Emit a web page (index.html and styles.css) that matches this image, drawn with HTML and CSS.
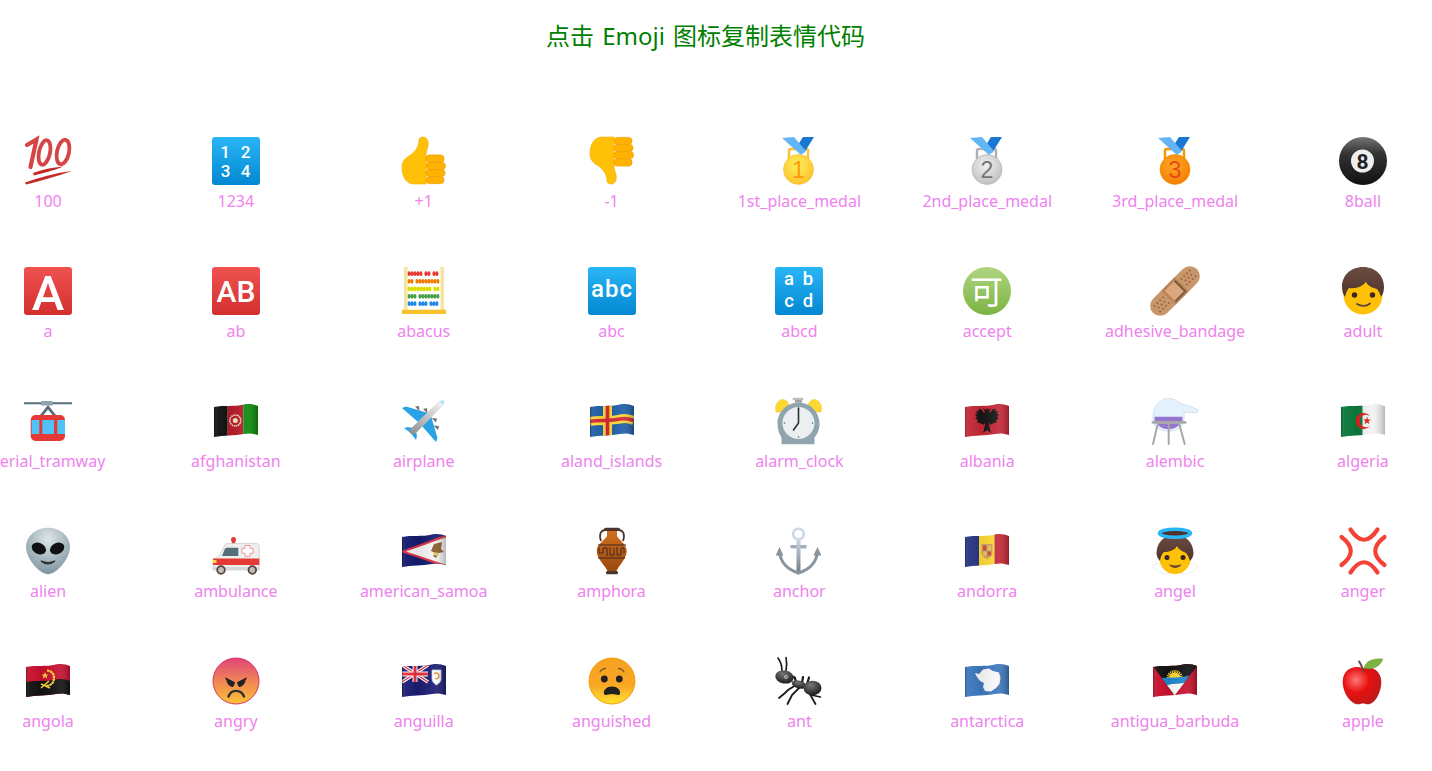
FILE: index.html
```html
<!DOCTYPE html>
<html lang="zh-CN">
<head>
    <meta charset="UTF-8">
    <meta name="viewport" content="width=device-width, initial-scale=1.0">
    <title>Emoji</title>
    <link rel="stylesheet" href="styles.css">
</head>
<body>
    <!-- shared gradients and shapes for the icons -->
    <svg class="icon-defs" width="0" height="0">
        <defs>
            <linearGradient id="tile-blue" x1="0" y1="0" x2="0" y2="1"><stop offset="0" stop-color="#29b6f6"/><stop offset="1" stop-color="#0288d1"/></linearGradient>
            <linearGradient id="tile-red" x1="0" y1="0" x2="0" y2="1"><stop offset="0" stop-color="#ef5350"/><stop offset="1" stop-color="#d32f2f"/></linearGradient>
            <linearGradient id="flag-shade" x1="0" y1="0" x2="1" y2="0">
                <stop offset="0" stop-color="#000" stop-opacity=".3"/>
                <stop offset=".08" stop-color="#fff" stop-opacity=".04"/>
                <stop offset=".35" stop-color="#000" stop-opacity=".06"/>
                <stop offset=".72" stop-color="#fff" stop-opacity=".07"/>
                <stop offset="1" stop-color="#000" stop-opacity=".25"/>
            </linearGradient>
            <radialGradient id="medal-gold" cx=".45" cy=".35" r=".7"><stop offset="0" stop-color="#ffee58"/><stop offset="1" stop-color="#fbc02d"/></radialGradient>
            <radialGradient id="medal-silver" cx=".45" cy=".35" r=".7"><stop offset="0" stop-color="#f0f0f0"/><stop offset="1" stop-color="#bdbdbd"/></radialGradient>
            <radialGradient id="medal-bronze" cx=".45" cy=".35" r=".7"><stop offset="0" stop-color="#ffa726"/><stop offset="1" stop-color="#f57c00"/></radialGradient>
            <linearGradient id="ball" x1="0" y1="0" x2="0" y2="1"><stop offset="0" stop-color="#757575"/><stop offset=".35" stop-color="#333"/><stop offset="1" stop-color="#111"/></linearGradient>
            <linearGradient id="hair" x1="0" y1="0" x2="0" y2="1"><stop offset="0" stop-color="#6d4c41"/><stop offset="1" stop-color="#4e342e"/></linearGradient>
            <linearGradient id="plane-body" x1="1" y1="0" x2="0" y2="1"><stop offset="0" stop-color="#fafafa"/><stop offset="1" stop-color="#8d8d8d"/></linearGradient>
            <radialGradient id="alien-head" cx=".5" cy=".25" r=".8"><stop offset="0" stop-color="#dfe6e9"/><stop offset="1" stop-color="#78909c"/></radialGradient>
            <linearGradient id="jar" x1="0" y1="0" x2="0" y2="1"><stop offset="0" stop-color="#d2701f"/><stop offset="1" stop-color="#9a4a10"/></linearGradient>
            <linearGradient id="anchor-metal" x1="0" y1="0" x2="0" y2="1"><stop offset="0" stop-color="#cdd6e6"/><stop offset="1" stop-color="#70787f"/></linearGradient>
            <linearGradient id="angry-face" x1="0" y1="0" x2="0" y2="1"><stop offset="0" stop-color="#e2447a"/><stop offset="1" stop-color="#fbc531"/></linearGradient>
            <linearGradient id="scared-face" x1="0" y1="0" x2="0" y2="1"><stop offset="0" stop-color="#f6a021"/><stop offset=".6" stop-color="#f9a825"/><stop offset="1" stop-color="#ffe22e"/></linearGradient>
            <radialGradient id="apple-red" cx=".35" cy=".35" r=".75"><stop offset="0" stop-color="#f77"/><stop offset=".45" stop-color="#e81010"/><stop offset="1" stop-color="#b71c1c"/></radialGradient>
            <radialGradient id="ant-body" cx=".4" cy=".3" r=".8"><stop offset="0" stop-color="#777"/><stop offset="1" stop-color="#111"/></radialGradient>
            <linearGradient id="accept-green" x1="0" y1="0" x2="0" y2="1"><stop offset="0" stop-color="#aed581"/><stop offset="1" stop-color="#7cb342"/></linearGradient>
            <path id="wave-path" d="M2 10C12 8 22 10 32 7.5C37 6.5 42 7.5 46 9V38C41 36.5 37 36 32 37C22 39 12 38 2 40Z"/>
            <clipPath id="wave"><use href="#wave-path"/></clipPath>
            <path id="wave-line" d="M2 1C12 -1 22 1 32 -1.5C37 -2.5 42 -1.5 46 0"/>
            <g id="thumb">
                <path d="M2 30C2 22 8 20 13 16C17 12 19 8 19 3C19 1 21 0 23 0C27 0 29 4 28 9C27 13 26 16 26 18V47H14C7 47 2 41 2 30Z" fill="#ffc107" stroke="#f5ab00" stroke-width=".6"/>
                <g fill="#ffb300" stroke="#f19e00" stroke-width=".8">
                    <rect x="26" y="18" width="18" height="7.4" rx="3.5"/>
                    <rect x="26" y="25.4" width="19.5" height="7.2" rx="3.5"/>
                    <rect x="26" y="32.6" width="19" height="7" rx="3.5"/>
                    <rect x="26" y="39.6" width="18" height="7" rx="3.5"/>
                </g>
            </g>
            <g id="ribbon">
                <path d="M28 0H39L29 16L21 11Z" fill="#1976d2"/>
                <path d="M7 1L19 0L31 14L26 18Z" fill="#64b5f6"/>
            </g>
        </defs>
    </svg>

    <h2 class="page-title">点击 Emoji 图标复制表情代码</h2>

    <div class="emoji-grid">

        <!-- row 1 -->
        <div class="emoji-item">
            <svg class="emoji-icon" viewBox="0 0 48 48">
                <g fill="none" stroke="#d64545" stroke-linecap="round">
                    <path d="M3 8L12.5 2.5L6.5 30" stroke-width="4.2"/>
                    <ellipse cx="20.5" cy="15.5" rx="5.5" ry="12.5" transform="rotate(12 20.5 15.5)" stroke-width="3.8"/>
                    <ellipse cx="39" cy="15" rx="6" ry="12.5" transform="rotate(12 39 15)" stroke-width="3.8"/>
                </g>
                <path d="M9 36C18 32.5 28 30.5 39.5 29.5C30 33.5 20 36 10 38.5Z" fill="#c62828"/>
                <path d="M1 45.5C16 40 32 36 48 34C32 39.5 16 44 2 47.5Z" fill="#c62828"/>
            </svg>
            <span class="emoji-name">100</span>
        </div>
        <div class="emoji-item">
            <svg class="emoji-icon" viewBox="0 0 48 48">
                <rect width="48" height="48" rx="3" fill="url(#tile-blue)"/>
                <text class="tile-text tile-digits"><tspan x="13" y="21">1</tspan><tspan x="33.5" y="21">2</tspan><tspan x="13.5" y="39.5">3</tspan><tspan x="33.5" y="39.5">4</tspan></text>
            </svg>
            <span class="emoji-name">1234</span>
        </div>
        <div class="emoji-item">
            <svg class="emoji-icon" viewBox="0 0 48 48"><use href="#thumb"/></svg>
            <span class="emoji-name">+1</span>
        </div>
        <div class="emoji-item">
            <svg class="emoji-icon" viewBox="0 0 48 48"><use href="#thumb" transform="matrix(1 0 0 -1 0 47)"/></svg>
            <span class="emoji-name">-1</span>
        </div>
        <div class="emoji-item">
            <svg class="emoji-icon" viewBox="0 0 48 48">
                <rect x="14" y="12" width="19" height="12" rx="2" fill="none" stroke="#fbc02d" stroke-width="2.4"/>
                <use href="#ribbon"/>
                <circle cx="23.5" cy="32.5" r="15" fill="url(#medal-gold)" stroke="#f9b825" stroke-width=".6"/>
                <text class="medal-text" x="23.5" y="41" fill="#ff9800">1</text>
            </svg>
            <span class="emoji-name">1st_place_medal</span>
        </div>
        <div class="emoji-item">
            <svg class="emoji-icon" viewBox="0 0 48 48">
                <rect x="14" y="12" width="19" height="12" rx="2" fill="none" stroke="#b0b0b0" stroke-width="2.4"/>
                <use href="#ribbon"/>
                <circle cx="24" cy="32.5" r="15" fill="url(#medal-silver)" stroke="#aaa" stroke-width=".6"/>
                <text class="medal-text" x="24" y="41" fill="#757575">2</text>
            </svg>
            <span class="emoji-name">2nd_place_medal</span>
        </div>
        <div class="emoji-item">
            <svg class="emoji-icon" viewBox="0 0 48 48">
                <rect x="14" y="12" width="19" height="12" rx="2" fill="none" stroke="#f59300" stroke-width="2.4"/>
                <use href="#ribbon"/>
                <circle cx="24" cy="32.5" r="15" fill="url(#medal-bronze)" stroke="#ef8a00" stroke-width=".6"/>
                <text class="medal-text" x="24" y="41" fill="#e64a19">3</text>
            </svg>
            <span class="emoji-name">3rd_place_medal</span>
        </div>
        <div class="emoji-item">
            <svg class="emoji-icon" viewBox="0 0 48 48">
                <circle cx="24" cy="24" r="24" fill="url(#ball)"/>
                <circle cx="23.5" cy="24" r="11.5" fill="#eee"/>
                <text class="ball-text" x="23.5" y="31.5">8</text>
            </svg>
            <span class="emoji-name">8ball</span>
        </div>

        <!-- row 2 -->
        <div class="emoji-item">
            <svg class="emoji-icon" viewBox="0 0 48 48">
                <rect width="48" height="48" rx="3" fill="url(#tile-red)"/>
                <text class="tile-text tile-big" x="24" y="42.5">A</text>
            </svg>
            <span class="emoji-name">a</span>
        </div>
        <div class="emoji-item">
            <svg class="emoji-icon" viewBox="0 0 48 48">
                <rect width="48" height="48" rx="3" fill="url(#tile-red)"/>
                <text class="tile-text tile-ab" x="24" y="34.5">AB</text>
            </svg>
            <span class="emoji-name">ab</span>
        </div>
        <div class="emoji-item">
            <svg class="emoji-icon" viewBox="0 0 48 48">
                <rect x="5" y="2" width="37" height="41" fill="#fff"/>
                <g fill="none" stroke-width="4.8" stroke-linecap="round" transform="scale(.65 1)">
                    <path d="M13.8 6.7H60" stroke="#e53935" stroke-dasharray="0 4.6 0 4.6 0 4.6 0 4.6 0 7.7 0 4.6 0 7.7 0 4.6"/>
                    <path d="M13.8 14.3H60" stroke="#ef7c00" stroke-dasharray="0 4.6 0 7.7 0 4.6 0 4.6 0 4.6 0 4.6 0 4.6 0 4.6"/>
                    <path d="M13.8 22H60" stroke="#dddd00" stroke-dasharray="0 4.6 0 4.6 0 4.6 0 4.6 0 4.6 0 4.6 0 4.6 0 7.7"/>
                    <path d="M13.8 29.3H60" stroke="#43a047" stroke-dasharray="0 4.6 0 4.6 0 7.7 0 4.6 0 4.6 0 4.6 0 4.6 0 4.6"/>
                    <path d="M13.8 36.7H60" stroke="#1e88e5" stroke-dasharray="0 4.6 0 4.6 0 7.7 0 4.6 0 4.6 0 7.7 0 4.6 0 4.6"/>
                </g>
                <rect x="4" y="0" width="3.5" height="43" fill="#f5e3a0"/>
                <rect x="40.5" y="0" width="3.5" height="43" fill="#f5e3a0"/>
                <rect x="2" y="42.7" width="44" height="4.3" fill="#fbc02d"/>
            </svg>
            <span class="emoji-name">abacus</span>
        </div>
        <div class="emoji-item">
            <svg class="emoji-icon" viewBox="0 0 48 48">
                <rect width="48" height="48" rx="3" fill="url(#tile-blue)"/>
                <text class="tile-text tile-abc" x="24" y="30">abc</text>
            </svg>
            <span class="emoji-name">abc</span>
        </div>
        <div class="emoji-item">
            <svg class="emoji-icon" viewBox="0 0 48 48">
                <rect width="48" height="48" rx="3" fill="url(#tile-blue)"/>
                <text class="tile-text tile-letters"><tspan x="14" y="18">a</tspan><tspan x="33" y="18">b</tspan><tspan x="14" y="40">c</tspan><tspan x="33" y="40">d</tspan></text>
            </svg>
            <span class="emoji-name">abcd</span>
        </div>
        <div class="emoji-item">
            <svg class="emoji-icon" viewBox="0 0 48 48">
                <circle cx="24" cy="24" r="24" fill="url(#accept-green)"/>
                <text class="tile-text accept-text" x="23.5" y="37">可</text>
            </svg>
            <span class="emoji-name">accept</span>
        </div>
        <div class="emoji-item">
            <svg class="emoji-icon" viewBox="0 0 48 48">
                <g transform="rotate(-45 24 24)">
                    <rect x="-7" y="14" width="62" height="20" rx="10" fill="#c9966b"/>
                    <rect x="14.5" y="14" width="19" height="20" fill="#b9845a"/>
                    <rect x="17" y="16.5" width="14" height="15" fill="#dba77c"/>
                    <path d="M31 16.5V31.5H17" fill="none" stroke="#7d5a3c" stroke-width="2"/>
                    <g fill="#8a5f3f">
                        <circle cx="-1" cy="20" r=".9"/><circle cx="3" cy="20" r=".9"/><circle cx="7" cy="20" r=".9"/><circle cx="11" cy="20" r=".9"/>
                        <circle cx="1" cy="24" r=".9"/><circle cx="5" cy="24" r=".9"/><circle cx="9" cy="24" r=".9"/>
                        <circle cx="-1" cy="28" r=".9"/><circle cx="3" cy="28" r=".9"/><circle cx="7" cy="28" r=".9"/><circle cx="11" cy="28" r=".9"/>
                        <circle cx="37" cy="20" r=".9"/><circle cx="41" cy="20" r=".9"/><circle cx="45" cy="20" r=".9"/><circle cx="49" cy="20" r=".9"/>
                        <circle cx="39" cy="24" r=".9"/><circle cx="43" cy="24" r=".9"/><circle cx="47" cy="24" r=".9"/>
                        <circle cx="37" cy="28" r=".9"/><circle cx="41" cy="28" r=".9"/><circle cx="45" cy="28" r=".9"/><circle cx="49" cy="28" r=".9"/>
                    </g>
                </g>
            </svg>
            <span class="emoji-name">adhesive_bandage</span>
        </div>
        <div class="emoji-item">
            <svg class="emoji-icon" viewBox="0 0 48 48">
                <circle cx="24" cy="28" r="19.5" fill="#ffc107"/>
                <path d="M24 0C11 0 3 9 3 20C3 24 4 27 6 30C7 26 8 23 10 21C17 22 23 20 27 15C29 19 34 21 38 22C40 25 41.5 27 42 30C44 27 45 24 45 20C45 9 37 0 24 0Z" fill="url(#hair)"/>
                <circle cx="15.5" cy="28" r="2.7" fill="#3e2723"/>
                <circle cx="33.5" cy="28" r="2.7" fill="#3e2723"/>
                <path d="M18 37Q25 41 31 36.5" fill="none" stroke="#5d4037" stroke-width="1.8" stroke-linecap="round"/>
            </svg>
            <span class="emoji-name">adult</span>
        </div>

        <!-- row 3 -->
        <div class="emoji-item">
            <svg class="emoji-icon" viewBox="0 0 48 48">
                <path d="M0 6.3H48" stroke="#546e7a" stroke-width="2"/>
                <path d="M24 8L16 18H19.5L24 12.5L28.5 18H32Z" fill="#546e7a"/>
                <rect x="17" y="4" width="12" height="4.5" rx="1" fill="#90a4ae"/>
                <rect x="6.7" y="18" width="34.3" height="26" rx="5" fill="#e53935"/>
                <rect x="7.6" y="23" width="7.7" height="14" fill="#4fc3f7"/>
                <rect x="18.3" y="23" width="11.7" height="14" fill="#4fc3f7"/>
                <rect x="33.3" y="23" width="7.7" height="14" fill="#4fc3f7"/>
            </svg>
            <span class="emoji-name">aerial_tramway</span>
        </div>
        <div class="emoji-item">
            <svg class="emoji-icon" viewBox="0 0 48 48">
                <g clip-path="url(#wave)">
                    <rect x="2" y="5" width="13.7" height="38" fill="#111"/>
                    <rect x="15.7" y="5" width="15.6" height="38" fill="#b71c2c"/>
                    <rect x="31.3" y="5" width="14.7" height="38" fill="#0a8a0a"/>
                    <circle cx="23.3" cy="23.5" r="5.5" fill="none" stroke="#f1e3c0" stroke-width="1.6" stroke-dasharray="1.5 .6"/>
                    <circle cx="23.3" cy="23.5" r="2.5" fill="#f1e3c0"/>
                    <use href="#wave-path" fill="url(#flag-shade)"/>
                </g>
            </svg>
            <span class="emoji-name">afghanistan</span>
        </div>
        <div class="emoji-item">
            <svg class="emoji-icon" viewBox="0 0 48 48">
                <path d="M2 11L6 9.5L28 16L18 25Z" fill="#29a3e6"/>
                <path d="M36 45L37.5 41L31 19L22 29Z" fill="#29a3e6"/>
                <path d="M4 31L8 30L17 32L12 37Z" fill="#29a3e6"/>
                <path d="M16 43L17 39L15 30L10 35Z" fill="#29a3e6"/>
                <path d="M15 9.5L19 9L19.5 14.5Z M23 12L27 11L27.5 16.5Z M38 33L39 29L33.5 28.5Z M36 25.5L37 21.5L31.5 21Z" fill="#757575"/>
                <path d="M43.5 3.5C45 4.5 44 7 42 9.5L15 37L10 36.5L10.5 32L37.5 5.5C39.5 3.8 42 2.8 43.5 3.5Z" fill="url(#plane-body)"/>
                <path d="M43.5 3.5C45 4.5 44.5 6.5 43.2 8L39.3 4.5C41 3.5 42.5 3 43.5 3.5Z" fill="#b3e5fc"/>
            </svg>
            <span class="emoji-name">airplane</span>
        </div>
        <div class="emoji-item">
            <svg class="emoji-icon" viewBox="0 0 48 48">
                <g clip-path="url(#wave)">
                    <rect x="2" y="5" width="44" height="38" fill="#1f5ea8"/>
                    <use href="#wave-line" y="23.5" fill="none" stroke="#fdd835" stroke-width="9"/>
                    <rect x="15" y="5" width="9" height="38" fill="#fdd835"/>
                    <use href="#wave-line" y="23.5" fill="none" stroke="#d62839" stroke-width="3.6"/>
                    <rect x="17.7" y="5" width="3.6" height="38" fill="#d62839"/>
                    <use href="#wave-path" fill="url(#flag-shade)"/>
                </g>
            </svg>
            <span class="emoji-name">aland_islands</span>
        </div>
        <div class="emoji-item">
            <svg class="emoji-icon" viewBox="0 0 48 48">
                <rect x="20" y="1.5" width="7" height="4" fill="#9e9e9e"/>
                <rect x="17.5" y="0.7" width="11" height="2.6" rx="1.2" fill="#bdbdbd"/>
                <path d="M1 15C-1 7 4 2 8.5 2.5C11 3 13.5 5.5 14 8V15Z" fill="#fdd835" stroke="#e8c32a" stroke-width=".5"/>
                <path d="M46 15C48 7 43 2 38.5 2.5C36 3 33.5 5.5 33 8V15Z" fill="#fdd835" stroke="#e8c32a" stroke-width=".5"/>
                <path d="M6.5 47.3H39.5V40.5C43 37 44.5 31.5 44.5 26.5C44.5 15 35 5.5 23.5 5.5S2.5 15 2.5 26.5C2.5 31.5 4 37 6.5 40.5Z" fill="#90a4ae"/>
                <circle cx="23.5" cy="26" r="16" fill="#eceff1"/>
                <g fill="#546e7a">
                    <circle cx="23.5" cy="12" r=".8"/><circle cx="23.5" cy="40" r=".8"/><circle cx="9.5" cy="26" r=".8"/><circle cx="37.5" cy="26" r=".8"/>
                </g>
                <path d="M23.5 26V11M23.5 26L18.5 33" fill="none" stroke="#263238" stroke-width="1.6" stroke-linecap="round"/>
            </svg>
            <span class="emoji-name">alarm_clock</span>
        </div>
        <div class="emoji-item">
            <svg class="emoji-icon" viewBox="0 0 48 48">
                <g clip-path="url(#wave)">
                    <rect x="2" y="5" width="44" height="38" fill="#c62836"/>
                    <g fill="#161616">
                        <path d="M22 17L18 12L15 12.5L16 14.5L13 14L14 17L12 17.5L14 20L12 21.5L15 23L14 25.5L17 26L21 28Z"/>
                        <path d="M26 17L30 12L33 12.5L32 14.5L35 14L34 17L36 17.5L34 20L36 21.5L33 23L34 25.5L31 26L27 28Z"/>
                        <ellipse cx="24" cy="21" rx="3.5" ry="8"/>
                        <path d="M22 28H26L28 36L24 33L20 36Z"/>
                        <path d="M22 15L20 11L23 13L24 11L25 13L28 11L26 15Z"/>
                    </g>
                    <use href="#wave-path" fill="url(#flag-shade)"/>
                </g>
            </svg>
            <span class="emoji-name">albania</span>
        </div>
        <div class="emoji-item">
            <svg class="emoji-icon" viewBox="0 0 48 48">
                <path d="M2 21C2 10 8 1.5 17.5 1.5C23 1.5 26 4 30 6.5L46 12C47.5 13 47 16 45 16L33 15C34 25 31 34 17.5 34C8 34 2 30 2 21Z" fill="#e3f2fd" stroke="#c9dcec" stroke-width=".8"/>
                <path d="M3.5 19.7H31.5V25H3.5ZM6 26.5H29C27 30 23 32 17.5 32C12 32 8 30 6 26.5Z" fill="#9575cd"/>
                <rect x="0.5" y="24" width="35" height="2.7" rx="1.3" fill="#a8a8a8"/>
                <path d="M7 26L2 47M17.7 26V47M28 26L33.7 47" fill="none" stroke="#a8a8a8" stroke-width="2" stroke-linecap="round"/>
            </svg>
            <span class="emoji-name">alembic</span>
        </div>
        <div class="emoji-item">
            <svg class="emoji-icon" viewBox="0 0 48 48">
                <g clip-path="url(#wave)">
                    <rect x="2" y="5" width="21.7" height="38" fill="#0b7a3b"/>
                    <rect x="23.7" y="5" width="22.3" height="38" fill="#f3f3f3"/>
                    <path d="M31.13 19.25A8 8 0 1 0 31.13 28.75A6.3 6.3 0 1 1 31.13 19.25Z" fill="#e02020"/>
                    <path d="M28 19.5L29 22.5L32 22.5L29.6 24.3L30.5 27.2L28 25.5L25.5 27.2L26.4 24.3L24 22.5L27 22.5Z" fill="#e02020"/>
                    <use href="#wave-path" fill="url(#flag-shade)"/>
                </g>
            </svg>
            <span class="emoji-name">algeria</span>
        </div>

        <!-- row 4 -->
        <div class="emoji-item">
            <svg class="emoji-icon" viewBox="0 0 48 48">
                <path d="M24 0.7C36 0.7 46 9 46 20C46 32 32 47.3 24 47.3C16 47.3 2 32 2 20C2 9 12 0.7 24 0.7Z" fill="url(#alien-head)"/>
                <ellipse cx="14.8" cy="21.5" rx="7.5" ry="5.5" transform="rotate(25 14.8 21.5)" fill="#111"/>
                <ellipse cx="33.2" cy="21.5" rx="7.5" ry="5.5" transform="rotate(-25 33.2 21.5)" fill="#111"/>
                <path d="M17 34Q24 40 31 34Q24 37 17 34Z" fill="#263238" stroke="#263238" stroke-width="1.2"/>
            </svg>
            <span class="emoji-name">alien</span>
        </div>
        <div class="emoji-item">
            <svg class="emoji-icon" viewBox="0 0 48 48">
                <circle cx="21.5" cy="12.5" r="2.5" fill="#e53935"/>
                <rect x="19.8" y="13" width="3.4" height="3.5" fill="#e53935"/>
                <path d="M15 16.5H44.5Q47.3 16.5 47.3 19.5V43H1V33L8 27.5L11.5 20Q13 16.5 15 16.5Z" fill="#eeeeee" stroke="#c4c4c4" stroke-width=".6"/>
                <path d="M10 29L12.8 22Q13.3 20.7 15 20.7H26.3V29Z" fill="#546e7a"/>
                <path d="M33 18.5H38V21.3H41V26.3H38V29.3H33V26.3H30V21.3H33Z" fill="#fff" stroke="#f28b8b" stroke-width=".9"/>
                <path d="M1 31.5H47.3V38H1Z" fill="#e53935"/>
                <rect x="1" y="33" width="3.5" height="3" fill="#fdd835"/>
                <rect x="0.7" y="40" width="46.6" height="2.8" fill="#d8d8d8"/>
                <circle cx="9" cy="43" r="3.8" fill="#bdbdbd" stroke="#5d4037" stroke-width="1.8"/>
                <circle cx="40.3" cy="43" r="3.8" fill="#bdbdbd" stroke="#5d4037" stroke-width="1.8"/>
            </svg>
            <span class="emoji-name">ambulance</span>
        </div>
        <div class="emoji-item">
            <svg class="emoji-icon" viewBox="0 0 48 48">
                <g clip-path="url(#wave)">
                    <rect x="2" y="5" width="44" height="38" fill="#14196e"/>
                    <path d="M0 24.5L48 7V41Z" fill="#d9303f"/>
                    <path d="M6 24.5L48 9.5V38.5Z" fill="#f3f3f3"/>
                    <path d="M34 17L42 15L41 22L44 25L39 26L36 31L33 29L35 26L31 24Z" fill="#8a5a2b"/>
                    <path d="M33 25L39 26L37 29L34 28Z" fill="#e8c95a"/>
                    <use href="#wave-path" fill="url(#flag-shade)"/>
                </g>
            </svg>
            <span class="emoji-name">american_samoa</span>
        </div>
        <div class="emoji-item">
            <svg class="emoji-icon" viewBox="0 0 48 48">
                <path d="M18 3C12 3 11 8 13 14M30 3C36 3 37 8 35 14" fill="none" stroke="#4e342e" stroke-width="1.8"/>
                <path d="M19 3H29L29 9C31 13 38.7 17 38.7 24C38.7 32 31 38 28.5 44H19.5C17 38 8.7 32 8.7 24C8.7 17 17 13 19 9Z" fill="url(#jar)"/>
                <rect x="16" y="0.7" width="16" height="3.3" rx="1.5" fill="#4e342e"/>
                <rect x="18" y="44" width="12" height="3.3" rx="1.5" fill="#4e342e"/>
                <path d="M10 18H38M10 31H37" stroke="#3e2723" stroke-width="1"/>
                <path d="M11 20V26H15V21H19V29M22 20V28H26V21M29 20V28H33V21H36V26" fill="none" stroke="#3e2723" stroke-width="1"/>
            </svg>
            <span class="emoji-name">amphora</span>
        </div>
        <div class="emoji-item">
            <svg class="emoji-icon" viewBox="0 0 48 48">
                <circle cx="23.5" cy="7" r="5.3" fill="none" stroke="#cdd6e6" stroke-width="2.6"/>
                <path d="M15.5 19.7H31.5" stroke="#a4adb8" stroke-width="3.4"/>
                <path d="M21.5 12.5H25.5V46L23.5 47.5L21.5 46Z" fill="url(#anchor-metal)"/>
                <path d="M4.5 24C5 36 14 43 23.5 46C33 43 42 36 42.5 24" fill="none" stroke="#8a949e" stroke-width="3.2"/>
                <path d="M4.5 20L0.7 28.5H8.5ZM42.5 20L38.5 28.5H46.5Z" fill="#8a949e"/>
            </svg>
            <span class="emoji-name">anchor</span>
        </div>
        <div class="emoji-item">
            <svg class="emoji-icon" viewBox="0 0 48 48">
                <g clip-path="url(#wave)">
                    <rect x="2" y="5" width="14" height="38" fill="#283583"/>
                    <rect x="16" y="5" width="15.5" height="38" fill="#fdd835"/>
                    <rect x="31.5" y="5" width="14.5" height="38" fill="#c62836"/>
                    <path d="M18.5 17H29.5V26C29.5 29 26 31 24 32C22 31 18.5 29 18.5 26Z" fill="#c9a06c"/>
                    <rect x="20" y="18.5" width="3.5" height="5" fill="#d84a3a"/>
                    <rect x="24.5" y="18.5" width="3.5" height="5" fill="#e8c84a"/>
                    <rect x="20" y="24.5" width="3.5" height="4" fill="#e8c84a"/>
                    <rect x="24.5" y="24.5" width="3.5" height="4" fill="#d84a3a"/>
                    <use href="#wave-path" fill="url(#flag-shade)"/>
                </g>
            </svg>
            <span class="emoji-name">andorra</span>
        </div>
        <div class="emoji-item">
            <svg class="emoji-icon" viewBox="0 0 48 48">
                <path d="M1 39C4 36 9 36 13 38L18 46.5C12 48 5 45 1 39ZM47 39C44 36 39 36 35 38L30 46.5C36 48 43 45 47 39Z" fill="#fff" stroke="#e0e0e0" stroke-width=".6"/>
                <circle cx="24" cy="31.5" r="15.5" fill="#ffc107"/>
                <path d="M24 8C13 8 6 15 5.5 26C5.5 29 7 32 9 34C10 29 11 27 13 25C18 25 24 23 26 19C28 23 33 25 35 26C37 29 38 30 39 34C41 32 42.5 29 42.5 26C42 15 35 8 24 8Z" fill="url(#hair)"/>
                <ellipse cx="24" cy="6.3" rx="15.5" ry="4" fill="#4e342e" stroke="#29b6f6" stroke-width="3.4"/>
                <circle cx="16" cy="30.5" r="2.5" fill="#3e2723"/>
                <circle cx="32" cy="30.5" r="2.5" fill="#3e2723"/>
                <path d="M18.5 38Q24 43 30 38Q24 40 18.5 38Z" fill="#5d4037" stroke="#5d4037" stroke-width=".8"/>
            </svg>
            <span class="emoji-name">angel</span>
        </div>
        <div class="emoji-item">
            <svg class="emoji-icon" viewBox="0 0 48 48">
                <g fill="none" stroke="#f44336" stroke-width="4.2" stroke-linecap="round">
                    <path d="M11.5 2.5Q25 23 38.5 2.5"/>
                    <path d="M11.5 45.5Q25 25 38.5 45.5"/>
                    <path d="M2.5 10Q21 24 2.5 38"/>
                    <path d="M45.5 10Q27 24 45.5 38"/>
                </g>
            </svg>
            <span class="emoji-name">anger</span>
        </div>

        <!-- row 5 -->
        <div class="emoji-item">
            <svg class="emoji-icon" viewBox="0 0 48 48">
                <g clip-path="url(#wave)">
                    <rect x="2" y="5" width="44" height="38" fill="#c8102e"/>
                    <path d="M2 25C12 23 22 25 32 22.5C37 21.5 42 22.5 46 24V42H2Z" fill="#111"/>
                    <path d="M23 13.5C29 14 31 19 29.5 24C28.5 27 25.5 29 22 29" fill="none" stroke="#fdd835" stroke-width="2.2" stroke-dasharray="2.5 .5"/>
                    <path d="M17 31L25 24M17 27L26 31" fill="none" stroke="#fdd835" stroke-width="1.5"/>
                    <path d="M21 15L22 17.5L24.5 17.5L22.5 19L23.3 21.5L21 20L18.7 21.5L19.5 19L17.5 17.5L20 17.5Z" fill="#fdd835"/>
                    <use href="#wave-path" fill="url(#flag-shade)"/>
                </g>
            </svg>
            <span class="emoji-name">angola</span>
        </div>
        <div class="emoji-item">
            <svg class="emoji-icon" viewBox="0 0 48 48">
                <circle cx="24" cy="24" r="23" fill="url(#angry-face)" stroke="#d8306e" stroke-width="1"/>
                <path d="M13.5 21L22.5 25.5L21 29.5C17.5 29.5 15 26 15 23ZM34.5 21L25.5 25.5L27 29.5C30.5 29.5 33 26 33 23Z" fill="#212121" stroke="#212121" stroke-width="1" stroke-linejoin="round"/>
                <path d="M16.5 39.5C19 32 29 32 32 39.5" fill="none" stroke="#2e2e2e" stroke-width="2.4" stroke-linecap="round"/>
            </svg>
            <span class="emoji-name">angry</span>
        </div>
        <div class="emoji-item">
            <svg class="emoji-icon" viewBox="0 0 48 48">
                <g clip-path="url(#wave)">
                    <rect x="2" y="5" width="44" height="38" fill="#1c1c74"/>
                    <path d="M2 8L28 25M28 8L2 25" stroke="#fff" stroke-width="3.4"/>
                    <path d="M2 8L28 25M28 8L2 25" stroke="#e53040" stroke-width="1.3"/>
                    <path d="M15 5V25M2 17H28" stroke="#fff" stroke-width="5"/>
                    <path d="M15 5V25M2 17H28" stroke="#e53040" stroke-width="3"/>
                    <path d="M32 13H41V22C41 25 38 27 36.5 28C35 27 32 25 32 22Z" fill="#fff" stroke="#b3d4e8" stroke-width=".8"/>
                    <path d="M34 17C36 15 39 16 39 19C39 21 37 23 35 21" fill="none" stroke="#e88a2e" stroke-width="1.4"/>
                    <use href="#wave-path" fill="url(#flag-shade)"/>
                </g>
            </svg>
            <span class="emoji-name">anguilla</span>
        </div>
        <div class="emoji-item">
            <svg class="emoji-icon" viewBox="0 0 48 48">
                <circle cx="24" cy="24" r="23" fill="url(#scared-face)" stroke="#ef9d0b" stroke-width="1"/>
                <circle cx="16.3" cy="22" r="3.4" fill="#212121"/>
                <circle cx="31.3" cy="22" r="3.4" fill="#212121"/>
                <path d="M12 15Q14 11.5 17.5 11.5M36 15Q34 11.5 30.5 11.5" fill="none" stroke="#7a5a2a" stroke-width="1.3" stroke-linecap="round"/>
                <path d="M16 37C15 33 19 29.5 24 29.5C29 29.5 33 33 32 37C31 39 28 37 24 37C20 37 17 39 16 37Z" fill="#212121"/>
            </svg>
            <span class="emoji-name">anguished</span>
        </div>
        <div class="emoji-item">
            <svg class="emoji-icon" viewBox="0 0 48 48">
                <g fill="none" stroke="#1a1a1a" stroke-linecap="round">
                    <path d="M7 14C7 8 6 5 3 1" stroke-width="1.6"/>
                    <path d="M11 14C12 8 12 5 11 0.5" stroke-width="1.6"/>
                    <path d="M21 28L13 33L10 36L4 41" stroke-width="1.8"/>
                    <path d="M25 30L17 38L12.5 47" stroke-width="1.8"/>
                    <path d="M31 32L36 39L40.5 47" stroke-width="1.8"/>
                    <path d="M21 26L20 21L19 20M27 26L28 20M32 27L34 20.5" stroke-width="2.2"/>
                    <path d="M36 38L45.5 40" stroke-width="1.4"/>
                </g>
                <ellipse cx="9.5" cy="20" rx="9.3" ry="6.5" transform="rotate(10 9.5 20)" fill="url(#ant-body)"/>
                <circle cx="11" cy="20" r="1.7" fill="#eee"/>
                <circle cx="11" cy="20" r=".8" fill="#111"/>
                <ellipse cx="24" cy="27.5" rx="7.5" ry="3.8" transform="rotate(15 24 27.5)" fill="url(#ant-body)"/>
                <ellipse cx="37.5" cy="31" rx="9" ry="7.3" fill="url(#ant-body)"/>
            </svg>
            <span class="emoji-name">ant</span>
        </div>
        <div class="emoji-item">
            <svg class="emoji-icon" viewBox="0 0 48 48">
                <g clip-path="url(#wave)">
                    <rect x="2" y="5" width="44" height="38" fill="#3d78bd"/>
                    <path d="M12 16L16 17L20 12.5L26 11.5L30 14L36 15.5L37.5 21L36.5 27L33 31L28 34.5L22 34L20 30L21 26L17 24L14 20Z" fill="#f8f8f8"/>
                    <use href="#wave-path" fill="url(#flag-shade)"/>
                </g>
            </svg>
            <span class="emoji-name">antarctica</span>
        </div>
        <div class="emoji-item">
            <svg class="emoji-icon" viewBox="0 0 48 48">
                <g clip-path="url(#wave)">
                    <rect x="2" y="5" width="44" height="38" fill="#c8102e"/>
                    <path d="M2 5H46V9L23.7 38.5L2 9Z" fill="#111"/>
                    <circle cx="23.7" cy="21" r="6.5" fill="none" stroke="#fdd835" stroke-width="3" stroke-dasharray="1 .8"/>
                    <circle cx="23.7" cy="21" r="5.5" fill="#fdd835"/>
                    <path d="M15.6 27.5L33.5 25.5L23.7 38.5Z" fill="#fff"/>
                    <path d="M10.8 21C18 20.5 30 21 38.4 18.5L33.1 26C27 26.5 20 27 16 28Z" fill="#1e88d0"/>
                    <use href="#wave-path" fill="url(#flag-shade)"/>
                </g>
            </svg>
            <span class="emoji-name">antigua_barbuda</span>
        </div>
        <div class="emoji-item">
            <svg class="emoji-icon" viewBox="0 0 48 48">
                <path d="M23.5 11C15 8 3.7 12 3.7 25C3.7 36 12 47.3 19 47.3C21 47.3 22 46.5 24 46.5C26 46.5 27 47.3 29 47.3C36 47.3 42.3 35 42.3 25C42.3 13 32 8 23.5 11Z" fill="url(#apple-red)"/>
                <path d="M24 16L21.5 9L18.7 4L20.8 3.5L23.5 8.5L25.5 15.5Z" fill="#6d4c41"/>
                <path d="M25.3 11.3C26 5 33 1 43.7 2C42 8 36 13 25.3 11.3Z" fill="#7cb342" stroke="#689f38" stroke-width=".5"/>
            </svg>
            <span class="emoji-name">apple</span>
        </div>

    </div>
</body>
</html>
```

FILE: styles.css
```css
body {
    margin: 0;
    padding-right: 21px;
    background-color: white;
    font-family: "Noto Sans", "Noto Sans CJK SC", sans-serif;
    overflow: hidden;
}

.icon-defs {
    display: block;
}

.page-title {
    height: 137px;
    margin: 0;
    padding-top: 18px;
    box-sizing: border-box;
    color: green;
    font-size: 24px;
    font-weight: normal;
    line-height: 36px;
    text-align: center;
    word-spacing: 2px;
}

.emoji-grid {
    display: grid;
    grid-template-columns: repeat(8, 96px);
    grid-auto-rows: 130px;
    justify-content: space-between;
}

.emoji-item {
    display: flex;
    flex-direction: column;
    align-items: center;
}

.emoji-icon {
    display: block;
    flex: none;
    width: 48px;
    height: 48px;
    overflow: visible;
}

.emoji-name {
    margin-top: 4px;
    color: violet;
    font-size: 16px;
    line-height: 24px;
    white-space: nowrap;
}

.tile-text {
    fill: white;
    font-family: Roboto, sans-serif;
    font-weight: 500;
    text-anchor: middle;
}

.tile-digits {
    font-size: 17px;
}

.tile-big {
    font-size: 49px;
}

.tile-ab {
    font-size: 30px;
}

.tile-abc {
    font-size: 24px;
    letter-spacing: 1px;
}

.tile-letters {
    font-size: 18.5px;
}

.accept-text {
    font-family: "Noto Sans CJK SC", sans-serif;
    font-size: 33px;
    font-weight: 400;
}

.medal-text {
    font-family: "Liberation Sans", sans-serif;
    font-size: 23px;
    text-anchor: middle;
}

.ball-text {
    fill: #222;
    font-family: Roboto, sans-serif;
    font-size: 21px;
    font-weight: 700;
    text-anchor: middle;
}
```
